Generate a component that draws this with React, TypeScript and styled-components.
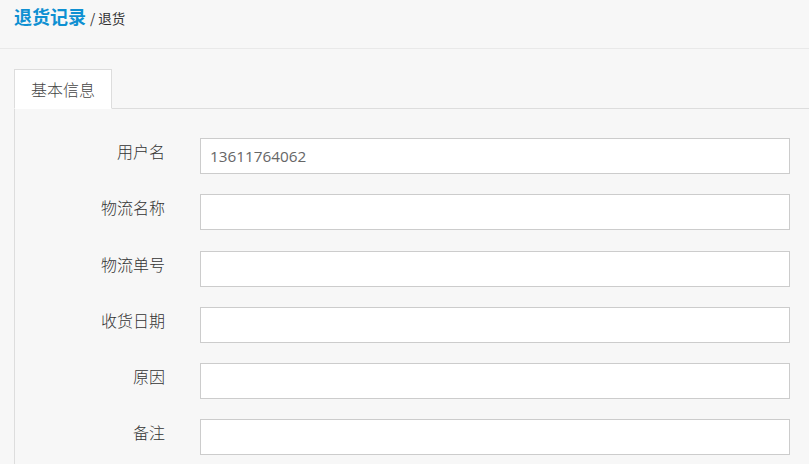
import React from "react";
import styled, { createGlobalStyle } from "styled-components";

const GlobalStyle = createGlobalStyle`
  html, body {
    margin: 0;
    padding: 0;
    background: #f7f7f7;
    font-family: "Open Sans", "Noto Sans CJK SC", sans-serif;
    color: #333;
  }
`;

const SPage = styled.div`
  width: 809px;
  height: 464px;
  overflow: hidden;
  background: #f7f7f7;
`;

const SHeader = styled.header`
  height: 49px;
  box-sizing: border-box;
  padding: 3px 14px 0;
  border-bottom: 1px solid #e9e9e9;
  display: flex;
  align-items: baseline;
`;

const STitle = styled.strong`
  font-size: 18px;
  font-weight: 700;
  color: #0e90d2;
  font-family: "Noto Sans CJK SC", sans-serif;
`;

const SCrumb = styled.small`
  font-size: 13.5px;
  color: #333;
  margin-left: 4px;
  font-family: "Noto Sans CJK SC", sans-serif;
`;

const SBody = styled.div`
  padding: 20px 0 0 14px;
`;

const STabBar = styled.ul`
  display: flex;
  margin: 0;
  padding: 0;
  list-style: none;
  border-bottom: 1px solid #dddddd;
`;

const STab = styled.li<{ $active: boolean }>`
  height: 40px;
  box-sizing: border-box;
  padding: 0 16px;
  margin-bottom: -1px;
  display: flex;
  align-items: center;
  font-size: 16px;
  color: #444;
  font-family: "Noto Sans CJK SC", sans-serif;
  font-weight: 300;
  background: ${(p) => (p.$active ? "#fff" : "transparent")};
  border: 1px solid ${(p) => (p.$active ? "#dddddd" : "transparent")};
  border-bottom-color: ${(p) => (p.$active ? "#fff" : "transparent")};
`;

const SPanel = styled.div`
  border-left: 1px solid #dddddd;
  padding-top: 29px;
  height: 400px;
`;

const SForm = styled.form`
  display: grid;
  grid-template-columns: 150px 590px;
  column-gap: 35px;
  row-gap: 20.25px;
`;

const SLabel = styled.label`
  text-align: right;
  font-size: 16px;
  line-height: 26px;
  color: #333;
  font-weight: 300;
  font-family: "Noto Sans CJK SC", sans-serif;
`;

const SInput = styled.input`
  height: 36px;
  box-sizing: border-box;
  border: 1px solid #ccc;
  background: #fff;
  padding: 0 9px;
  font-size: 15.3px;
  color: #666;
  font-family: "Open Sans", "Noto Sans CJK SC", sans-serif;
  outline: none;
`;

const fields = [
  { label: "用户名", value: "13611764062" },
  { label: "物流名称", value: "" },
  { label: "物流单号", value: "" },
  { label: "收货日期", value: "" },
  { label: "原因", value: "" },
  { label: "备注", value: "" },
];

const App = () => {
  return (
    <SPage>
      <GlobalStyle />
      <SHeader>
        <STitle>退货记录</STitle>
        <SCrumb>/ 退货</SCrumb>
      </SHeader>
      <SBody>
        <STabBar>
          <STab $active={true}>基本信息</STab>
        </STabBar>
        <SPanel>
          <SForm>
            {fields.map((f) => (
              <React.Fragment key={f.label}>
                <SLabel>{f.label}</SLabel>
                <SInput defaultValue={f.value} />
              </React.Fragment>
            ))}
          </SForm>
        </SPanel>
      </SBody>
    </SPage>
  );
};

export default App;
